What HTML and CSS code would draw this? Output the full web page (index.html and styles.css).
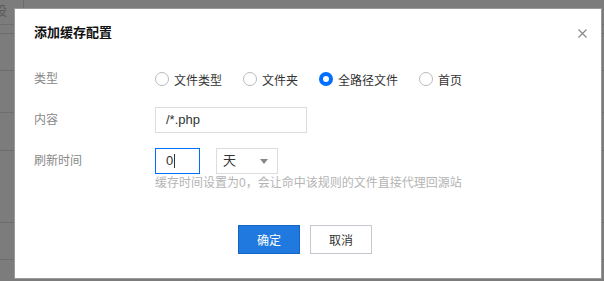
FILE: index.html
```html
<!DOCTYPE html>
<html lang="zh-CN">
<head>
  <meta charset="UTF-8" />
  <meta name="viewport" content="width=device-width, initial-scale=1.0" />
  <title>添加缓存配置</title>
  <link rel="stylesheet" href="styles.css">
</head>
<body>
  <div class="backdrop">
    <div class="bg-row head"><span class="bg-cell first">设</span><span class="bg-cell"></span></div>
    <div class="bg-row h9"></div>
    <div class="bg-row h37"></div>
    <div class="bg-row h42"></div>
    <div class="bg-row h38"></div>
    <div class="bg-row h72"></div>
    <div class="bg-row h37"></div>
    <div class="bg-row last"><span class="bg-text">自定义</span></div>
  </div>

  <div class="dialog">
    <div class="dialog-header">
      <h3>添加缓存配置</h3>
      <span class="close">
        <svg width="9" height="9" viewBox="0 0 9 9"><path d="M0.5 0.5L8.5 8.5M8.5 0.5L0.5 8.5" stroke="#8a8a8a" stroke-width="1.2" fill="none"/></svg>
      </span>
    </div>

    <div class="form">
      <div class="label">类型</div>
      <div class="radios">
        <label class="radio"><span class="dot"></span>文件类型</label>
        <label class="radio"><span class="dot"></span>文件夹</label>
        <label class="radio"><span class="dot checked"></span>全路径文件</label>
        <label class="radio"><span class="dot"></span>首页</label>
      </div>

      <div class="label">内容</div>
      <div class="field">
        <div class="input wide">/*.php</div>
      </div>

      <div class="label">刷新时间</div>
      <div class="field">
        <div class="input short focus">0<span class="caret"></span></div>
        <div class="select">天<span class="arrow"></span></div>
      </div>
      <div></div>
      <div class="help">缓存时间设置为0，会让命中该规则的文件直接代理回源站</div>
    </div>

    <div class="dialog-footer">
      <button class="btn primary">确定</button>
      <button class="btn">取消</button>
    </div>
  </div>
</body>
</html>
```

FILE: styles.css
```css
body {
  margin: 0;
  font-family: "Liberation Sans", "Noto Sans CJK SC", sans-serif;
  font-size: 12px;
  color: #333;
  background: #7c7c7c;
  overflow: hidden;
}
.backdrop {
  height: 281px;
}
.bg-row {
  border-bottom: 1px solid #6d6d6d;
  box-sizing: border-box;
}
.bg-row.head {
  height: 25px;
  display: flex;
}
.bg-cell {
  height: 24px;
  line-height: 22px;
  font-size: 13px;
  color: #5a5a5a;
}
.bg-cell.first {
  width: 23px;
  border-right: 1px solid #6d6d6d;
  text-indent: -6px;
  overflow: hidden;
}
.h9 { height: 9px; }
.h37 { height: 37px; }
.h38 { height: 38px; }
.h42 { height: 42px; }
.h72 { height: 72px; }
.bg-row.last {
  border-bottom: none;
  height: 30px;
}
.bg-text {
  display: block;
  padding: 18px 0 0 178px;
  color: #4a4a4a;
  font-size: 12px;
}

.dialog {
  position: absolute;
  left: 15px;
  top: 9px;
  width: 586px;
  height: 269px;
  background: #fff;
  box-shadow: 0 0 0 1px #9a9a9a;
}
.dialog-header {
  display: flex;
  justify-content: space-between;
  align-items: center;
  padding: 14px 14px 0 19px;
  height: 20px;
}
.dialog-header h3 {
  margin: 0;
  font-size: 13px;
  font-weight: 700;
  color: #111;
  line-height: 20px;
}
.close {
  display: flex;
  margin-top: 1px;
}

.form {
  display: grid;
  grid-template-columns: 121px 1fr;
  row-gap: 15px;
  padding: 23px 19px 0;
}
.label {
  line-height: 26px;
  color: #888;
}
.radios {
  display: flex;
  align-items: center;
  height: 26px;
}
.radio {
  display: flex;
  align-items: center;
  margin-right: 21px;
  color: #333;
}
.dot {
  width: 14px;
  height: 14px;
  box-sizing: border-box;
  border: 1px solid #bbb;
  border-radius: 50%;
  margin-right: 5px;
}
.dot.checked {
  border: 4px solid #006eff;
}
.field {
  display: flex;
  gap: 16px;
}
.input, .select {
  height: 26px;
  box-sizing: border-box;
  border: 1px solid #ddd;
  line-height: 24px;
  padding-left: 10px;
  font-size: 13px;
  color: #333;
}
.input.wide {
  width: 152px;
}
.input.short {
  width: 45px;
  display: flex;
  align-items: center;
}
.input.focus {
  border-color: #006eff;
}
.caret {
  width: 1px;
  height: 14px;
  background: #333;
  margin-left: 1px;
}
.select {
  width: 62px;
  padding-left: 6px;
  display: flex;
  justify-content: space-between;
  align-items: center;
}
.arrow {
  width: 0;
  height: 0;
  border-left: 4px solid transparent;
  border-right: 4px solid transparent;
  border-top: 5px solid #888;
  margin-right: 9px;
}
.help {
  grid-row: 4;
  grid-column: 2;
  margin-top: -15px;
  line-height: 18px;
  color: #b4b4b4;
}

.dialog-footer {
  display: flex;
  justify-content: center;
  gap: 10px;
  padding: 33px 6px 0 0;
}
.btn {
  width: 62px;
  height: 29px;
  border: 1px solid #c6c8cf;
  background: #fff;
  color: #333;
  font-family: inherit;
  font-size: 12px;
  padding: 0;
}
.btn.primary {
  background: #1f79de;
  border-color: #1566c2;
  color: #fff;
}
```
